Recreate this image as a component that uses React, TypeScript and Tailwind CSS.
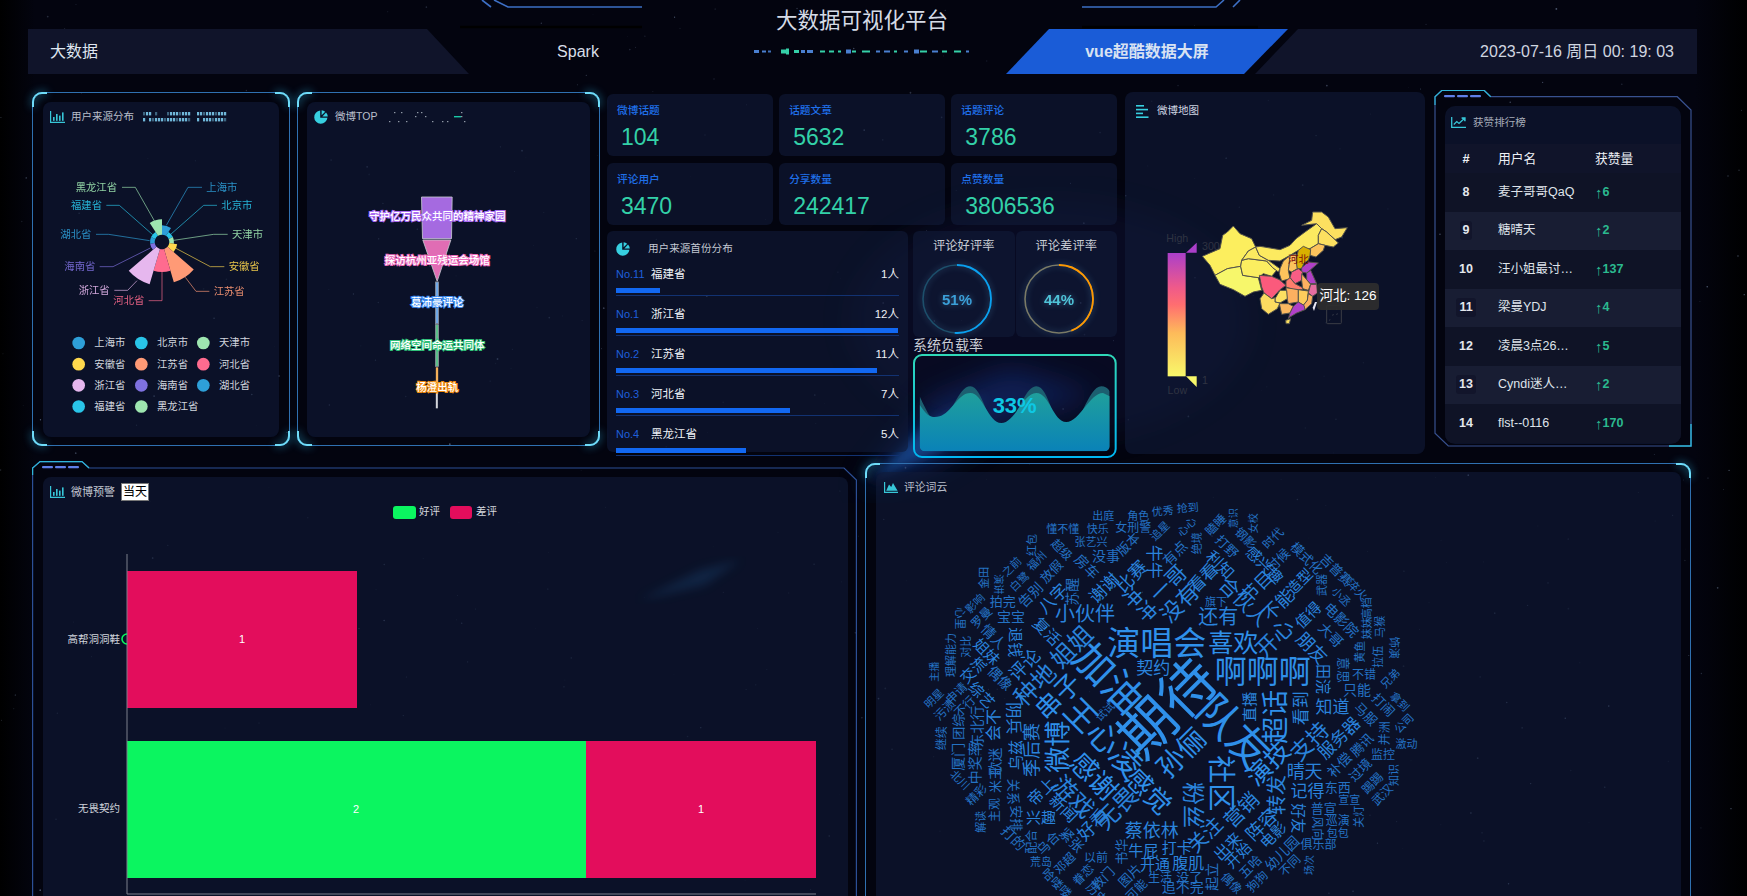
import type { ReactNode } from 'react';

type Word = [string, number, number, number, number];

// word cloud, positions read off two crops of the chart
const WORDS_L: Word[] = [
  ['出庭', 730, 182, 11, 0], ['角色', 835, 182, 11, 0], ['优秀', 908, 168, 11, -5], ['抢到', 983, 158, 11, -4],
  ['懂不懂', 608, 222, 11, 0], ['快乐', 713, 222, 11, 0], ['女刑警', 820, 218, 12, 0], ['张艺兴', 693, 260, 11, 0],
  ['没事', 738, 303, 14, 0], ['追星', 900, 228, 11, -45], ['心心', 980, 215, 11, -45], ['版本', 805, 268, 13, -45],
  ['牛牛', 880, 320, 17, 90], ['有点', 945, 295, 14, -45], ['绝境', 1010, 265, 11, -90], ['红包', 515, 270, 11, -90],
  ['超级', 605, 285, 12, 45], ['福州', 530, 318, 11, -45], ['之前', 455, 335, 11, -45], ['放假', 575, 350, 13, -45],
  ['房车', 680, 335, 14, 45], ['白鹭', 478, 380, 11, -45], ['告别', 512, 420, 14, -45], ['金田', 373, 368, 11, -90],
  ['演讲', 415, 388, 10, 90], ['拍完', 428, 440, 13, 0], ['八字', 580, 432, 17, -45], ['苏醒', 635, 410, 14, -90],
  ['谢谢', 733, 400, 17, -45], ['比赛', 815, 365, 18, -45], ['冲冲', 838, 448, 20, 45], ['一哥', 925, 385, 21, -45],
  ['影响', 345, 445, 11, -45], ['心里', 300, 490, 11, 90], ['罗曼', 365, 488, 12, -45], ['情人', 400, 545, 14, 45],
  ['宝宝', 453, 485, 14, 0], ['小伙伴', 675, 478, 20, 0], ['没有', 960, 445, 22, -45], ['看看', 1030, 370, 17, -45],
  ['利知', 1080, 330, 16, 45], ['还有', 1075, 485, 20, 0], ['旗下', 1068, 440, 11, 0], ['打野', 1100, 275, 13, 45],
  ['瞌睡', 1068, 210, 12, -45], ['喜欢', 1120, 565, 25, 0], ['演唱会', 890, 565, 33, 0], ['契约', 880, 640, 17, 0],
  ['加油', 745, 670, 40, 45], ['期待', 925, 760, 56, -45], ['队友', 1120, 830, 42, 45], ['姐姐', 635, 575, 24, -45],
  ['复活', 560, 530, 16, 45], ['退钱', 465, 562, 15, 90], ['评论', 495, 630, 18, -45], ['种地', 525, 690, 24, -45],
  ['串子', 595, 725, 26, -45], ['王心凌', 730, 850, 32, 45], ['试试', 735, 770, 11, -45], ['微博', 595, 875, 26, -90],
  ['直播', 1170, 755, 15, -90], ['社区', 1080, 985, 28, 90], ['孙俪', 965, 895, 28, -45], ['感觉', 865, 1010, 26, 45],
  ['感谢', 700, 965, 27, 45], ['游戏', 640, 1025, 24, 45], ['季后赛', 515, 885, 18, -90], ['乌兹', 465, 900, 15, -90],
  ['阴兵', 460, 790, 16, 90], ['粉丝', 1000, 1050, 23, 90], ['蔡依林', 875, 1128, 18, 0], ['牛屁', 850, 1187, 15, 0],
  ['打卡', 950, 1178, 15, 0], ['关注', 1035, 1140, 20, -45], ['营销', 1145, 1065, 20, -45], ['阵容', 1205, 1110, 18, -45],
  ['无畏', 770, 1060, 24, -45], ['好看', 700, 1110, 18, -45], ['帝上', 545, 1010, 16, -45], ['新闻', 610, 1060, 16, 45],
  ['兴趣', 543, 1087, 15, 0], ['关系', 460, 1010, 13, 90], ['安排', 468, 1090, 13, 90], ['歌迷', 405, 920, 14, -90],
  ['米王', 405, 975, 13, -90], ['中奖率', 345, 925, 14, -90], ['厦门', 295, 905, 14, -90], ['团综', 295, 815, 13, -90],
  ['东北行', 350, 815, 14, -90], ['继续', 245, 850, 12, -90], ['北川', 300, 975, 11, 45], ['精彩', 350, 1020, 12, -45],
  ['解读', 362, 1100, 11, -90], ['主观', 405, 1065, 12, -90], ['污渍', 255, 765, 12, -45], ['明星', 222, 730, 11, -45],
  ['主播', 225, 650, 10, -90], ['理解能力', 272, 600, 11, -90], ['对比', 318, 575, 11, -90], ['姐妹', 380, 590, 15, 45],
  ['交流', 340, 645, 15, -45], ['偶像', 420, 670, 14, 45], ['综艺', 365, 720, 15, 45], ['申请', 290, 715, 12, -45],
  ['不行', 315, 755, 12, -45], ['会不', 400, 810, 16, -90], ['打的', 460, 1150, 14, 45], ['配合', 515, 1160, 12, -90],
  ['乌合', 565, 1165, 13, -45], ['荒岛', 543, 1220, 11, 0], ['邓超', 615, 1225, 12, -45], ['紧张', 635, 1155, 14, 45],
  ['以前', 708, 1208, 12, 0], ['眷恋', 670, 1260, 12, -45], ['教门', 730, 1270, 13, -45], ['书华', 785, 1190, 13, -90],
  ['图片', 810, 1262, 13, -45], ['开通', 885, 1228, 15, 0], ['腹肌', 985, 1225, 16, 0], ['生活', 900, 1268, 12, 0],
  ['没了', 988, 1268, 13, 0], ['追不完', 968, 1296, 14, 0], ['哈喽喽', 590, 1285, 12, 45], ['可能', 830, 1305, 12, -45],
  ['历史', 710, 1315, 12, 45],
];

const WORDS_R: Word[] = [
  ['意识', 95, 190, 10, -90], ['女校', 152, 205, 10, -90], ['钢影', 130, 250, 12, 45], ['时代', 210, 250, 12, -45],
  ['时候', 225, 315, 13, -45], ['感兴趣', 185, 330, 15, 45], ['节目', 165, 395, 18, -45], ['合伙人', 125, 440, 20, 45],
  ['造型', 285, 380, 15, -45], ['不能', 225, 450, 18, -45], ['开心', 215, 550, 22, -45], ['模式化', 305, 310, 13, 45],
  ['吉普赛', 390, 345, 13, 45], ['淬火', 450, 405, 12, 45], ['武器', 350, 390, 11, -90], ['小丞', 405, 425, 11, 45],
  ['电影院', 405, 495, 14, 45], ['大哥', 375, 540, 14, 45], ['值得', 310, 480, 15, -45], ['朋友', 320, 580, 18, 45],
  ['高档', 480, 460, 11, -90], ['妹妹', 480, 520, 11, -90], ['马猴', 515, 515, 11, -90], ['饰演', 555, 578, 11, 90],
  ['拉伍', 510, 605, 11, -90], ['兄弟', 545, 670, 11, -45], ['黄鱼', 460, 590, 11, -90], ['意思', 410, 645, 13, 90],
  ['不错', 470, 660, 12, 0], ['田浣', 355, 672, 15, 90], ['只能', 450, 705, 14, 0], ['知道', 380, 758, 17, 0],
  ['马服', 475, 778, 13, 45], ['打闹', 525, 750, 13, 45], ['拿到', 572, 740, 11, 45], ['公司', 585, 805, 11, -45],
  ['并洲', 530, 835, 12, -90], ['激动', 592, 868, 11, 0], ['腾讯', 465, 870, 13, -45], ['服务器', 400, 850, 17, -45],
  ['支持', 315, 860, 22, -45], ['补偿', 400, 930, 14, -45], ['过境', 460, 945, 13, -45], ['监控', 525, 900, 12, 0],
  ['踢踢', 495, 985, 12, -45], ['知识', 555, 960, 11, -90], ['武汉', 523, 1020, 12, -45], ['晴天', 300, 952, 18, 0],
  ['记得', 308, 1008, 17, 0], ['东西', 395, 998, 13, 0], ['宣宣', 428, 1035, 11, 0], ['关灯', 455, 1085, 11, -90],
  ['普宣', 355, 1060, 13, 0], ['好友', 282, 1090, 15, 90], ['巡演', 395, 1098, 12, 0], ['包包', 395, 1135, 11, 0],
  ['风向', 335, 1120, 12, 90], ['俱乐部', 340, 1170, 12, 0], ['幼儿园', 235, 1195, 14, -45], ['不同', 258, 1232, 12, -45],
  ['场次', 315, 1230, 10, -90], ['狗狗', 165, 1280, 12, -45], ['五哈', 145, 1235, 13, -45], ['偶像', 90, 1285, 12, 45],
  ['开始', 110, 1200, 15, -45], ['起立', 35, 1265, 14, -90], ['出来', 80, 1175, 16, -45], ['电影', 210, 1140, 15, -45],
  ['转发', 220, 1020, 20, -90], ['演技', 195, 925, 25, -45], ['超话', 218, 785, 27, -90], ['看到', 292, 760, 17, -90],
  ['啊啊啊', 180, 650, 32, 0],
];

const ROSE = [
  { name: '上海市', color: '#2e9fd8', r: 50, line: '438,422 503,308 545,308', x: 558, y: 308, anchor: 'start' },
  { name: '北京市', color: '#29c4e8', r: 36, line: '450,450 550,362 590,362', x: 603, y: 362, anchor: 'start' },
  { name: '天津市', color: '#9ee6b0', r: 36, line: '460,467 580,449 622,449', x: 635, y: 449, anchor: 'start' },
  { name: '安徽省', color: '#ffd84d', r: 46, line: '465,490 570,546 612,546', x: 625, y: 546, anchor: 'start' },
  { name: '江苏省', color: '#ff9a76', r: 126, line: '495,578 527,620 567,620', x: 580, y: 620, anchor: 'start' },
  { name: '河北省', color: '#ff6b8f', r: 90, line: '425,562 425,648 385,648', x: 372, y: 648, anchor: 'end' },
  { name: '浙江省', color: '#e6b7ee', r: 132, line: '350,588 322,617 282,617', x: 268, y: 617, anchor: 'end' },
  { name: '海南省', color: '#7f71e0', r: 36, line: '390,490 278,546 238,546', x: 225, y: 546, anchor: 'end' },
  { name: '湖北省', color: '#2e9fd8', r: 36, line: '388,468 265,449 227,449', x: 213, y: 449, anchor: 'end' },
  { name: '福建省', color: '#29c4e8', r: 36, line: '397,450 297,362 258,362', x: 245, y: 362, anchor: 'end' },
  { name: '黑龙江省', color: '#9ee6b0', r: 68, line: '403,410 345,308 305,308', x: 290, y: 308, anchor: 'end' },
] as const;

const PROVINCES: [string, string][] = [
  ['#fcee5e', '37,198 55,190 90,175 98,135 112,125 130,107 150,130 185,145 197,170 175,182 155,210 152,228 112,235 75,255 60,225'],
  ['#f7f76b', '75,255 112,235 152,228 158,255 205,262 215,300 190,305 165,318 130,298 90,282'],
  ['#fbee60', '152,228 155,210 175,205 230,212 248,232 260,240 245,258 220,250 205,262 158,255'],
  ['#fcea60', '175,182 197,170 208,195 235,210 270,235 265,245 248,232 230,212 175,205 155,210'],
  ['#fcea60', '197,170 210,168 270,178 300,165 318,145 345,125 380,100 395,115 385,135 385,160 360,175 325,180 300,195 270,212 235,210 208,195'],
  ['#fce060', '335,105 365,90 368,65 395,65 415,80 435,115 472,112 455,140 435,148 410,125 395,115 380,100'],
  ['#fce060', '385,135 395,115 410,125 435,148 445,158 430,170 405,165 385,160'],
  ['#fcc35c', '360,175 385,160 405,165 400,180 378,200 360,195'],
  ['#fcc35c', '300,195 318,190 322,235 305,245 295,240'],
  ['#fcc35c', '270,235 280,212 300,195 295,240 300,265 275,272 268,250'],
  ['#d9b000', '325,180 340,168 362,178 360,195 355,210 342,218 335,235 322,235 318,208'],
  ['#b040c8', '335,232 355,215 385,218 362,238 350,248 335,245'],
  ['#f95d85', '305,245 325,235 338,245 335,270 315,280 300,262'],
  ['#b040c8', '350,248 362,240 380,280 362,280 350,268'],
  ['#fcb060', '335,250 350,268 362,282 355,300 338,295 335,270'],
  ['#ff7e6c', '288,272 300,262 315,280 338,292 338,298 310,298 288,290'],
  ['#e66da0', '362,282 380,282 382,308 368,318 355,308'],
  ['#fb5a7c', '208,255 245,258 268,268 288,285 270,298 245,325 222,308 215,290'],
  ['#fcb060', '288,292 325,298 325,335 295,340 290,320'],
  ['#fdcc5c', '325,298 355,302 352,330 340,345 325,335'],
  ['#fcb060', '355,310 368,318 365,340 345,358 340,345 352,330'],
  ['#fce062', '255,325 270,300 290,300 292,325 270,338 255,335'],
  ['#fcdb60', '210,325 222,308 245,325 255,322 255,335 270,338 262,355 235,372 215,355'],
  ['#fcb860', '268,340 295,340 310,348 300,368 275,372'],
  ['#b040c8', '300,368 310,348 325,335 342,345 345,358 320,368 300,380 295,385'],
  ['#fce060', '287,390 302,385 298,400 288,400'],
];

const FUNNEL = [
  { label: '守护亿万民众共同的精神家园', y: 395, glow: '#a96bf0' },
  { label: '探访杭州亚残运会场馆', y: 525, glow: '#ea6cbd' },
  { label: '葛沛豪评论', y: 652, glow: '#3f8cf0' },
  { label: '网络空间命运共同体', y: 782, glow: '#2fbf78' },
  { label: '杨澄出轨', y: 908, glow: '#f08c10' },
];

const STATS = [
  ['微博话题', '104'], ['话题文章', '5632'], ['话题评论', '3786'],
  ['评论用户', '3470'], ['分享数量', '242417'], ['点赞数量', '3806536'],
];

const PROVINCE_ROWS = [
  ['No.11', '福建省', '1人', 44], ['No.1', '浙江省', '12人', 282], ['No.2', '江苏省', '11人', 261],
  ['No.3', '河北省', '7人', 174], ['No.4', '黑龙江省', '5人', 130],
] as const;

const RANKS = [
  ['8', '麦子哥哥QaQ', '6'], ['9', '糖晴天', '2'], ['10', '汪小姐最讨…', '137'], ['11', '梁曼YDJ', '4'],
  ['12', '凌晨3点26…', '5'], ['13', 'Cyndi迷人…', '2'], ['14', 'flst--0116', '170'],
];

const STARS = (() => {
  const out: { x: number; y: number; r: number; o: number }[] = [];
  let s = 42;
  const rnd = () => (s = (s * 16807) % 2147483647) / 2147483647;
  for (let i = 0; i < 420; i++) {
    out.push({ x: rnd() * 1747, y: rnd() * 896, r: 0.3 + rnd() * 0.6, o: 0.12 + rnd() * 0.4 });
  }
  return out;
})();

function slice(r: number, i: number) {
  const step = (Math.PI * 2) / 11;
  const a = i * step - Math.PI / 2;
  const b = a + step;
  const p = (rad: number, ang: number) => `${425 + rad * Math.cos(ang)} ${472 + rad * Math.sin(ang)}`;
  return `M${p(22, a)} L${p(r, a)} A${r} ${r} 0 0 1 ${p(r, b)} L${p(22, b)} A22 22 0 0 0 ${p(22, a)} Z`;
}

function BarIcon() {
  return (
    <svg width="15" height="12" viewBox="0 0 15 12" className="shrink-0" fill="#37c6d8">
      <path d="M0 0h1.2v10.8H15V12H0z" />
      <rect x="3" y="6" width="1.6" height="3.8" />
      <rect x="6" y="3" width="1.6" height="6.8" />
      <rect x="9" y="4.6" width="1.6" height="5.2" />
      <rect x="12" y="1.4" width="1.6" height="8.4" />
    </svg>
  );
}

function PieIcon() {
  return (
    <svg width="14" height="14" viewBox="0 0 14 14" className="shrink-0" fill="#37cfe0">
      <path d="M6.2 0.6v7.2h7.2A6.6 6.6 0 1 1 6.2 0.6z" />
      <path d="M7.6 0.2A6.4 6.4 0 0 1 11.2 1.8L7.6 5.2z" />
      <path d="M12 2.6A6.4 6.4 0 0 1 13.8 6.4H8.4z" />
    </svg>
  );
}

function LinesIcon() {
  return (
    <svg width="13" height="13" viewBox="0 0 13 13" className="shrink-0" fill="#37cfe0">
      <rect y="0" width="8" height="1.6" />
      <rect y="3.8" width="12" height="1.6" />
      <rect y="7.6" width="7" height="1.6" />
      <rect y="11.4" width="12.5" height="1.6" />
    </svg>
  );
}

function TrendIcon() {
  return (
    <svg width="15" height="11" viewBox="0 0 15 11" className="shrink-0" fill="none" stroke="#37c6d8" strokeWidth="1.3">
      <path d="M0.7 0v10.3H15" />
      <path d="M2.8 7.4 5.8 4.6 8 6.4 13.6 1.2" />
      <path d="M10.6 1h3.4v3.2" fill="#37c6d8" />
    </svg>
  );
}

function AreaIcon() {
  return (
    <svg width="14" height="11" viewBox="0 0 14 11" className="shrink-0" fill="#37c6d8">
      <path d="M0 0h1.2v9.8H14V11H0z" />
      <path d="M2.2 8.8 5 2.4 7.2 5 9 1 13.6 8.8z" />
    </svg>
  );
}

function PanelTitle({ icon, text, gap, children }: { icon: ReactNode; text: string; gap: string; children?: ReactNode }) {
  return (
    <div className={`flex h-[30px] items-center pl-[7px] ${gap}`}>
      {icon}
      <span className="text-[10.5px] text-[#b9bfcb]">{text}</span>
      {children}
    </div>
  );
}

function DotStrip() {
  const rows = ['1110100011111111001111111111', '1011111111111111001011111111'];
  return (
    <svg width="84" height="10" viewBox="0 0 84 10" className="ml-[3px]">
      {rows.map((row, y) =>
        row.split('').map((c, x) =>
          c === '1' ? (
            <rect key={`${x}-${y}`} x={x * 3} y={y * 6} width="2.2" height="3.4" fill="#7acaec" opacity={(x * 7 + y * 3) % 4 === 0 ? 0.45 : 0.9} />
          ) : null,
        ),
      )}
    </svg>
  );
}

function SparseStrip() {
  const pts = [[5, 0], [12, 0], [28, 0], [32, 0], [72, 0], [26, 4], [36, 4], [72, 4], [0, 9], [9, 9], [17, 9], [43, 9], [53, 9], [58, 9], [75, 9]];
  return (
    <svg width="84" height="11" viewBox="0 0 84 11" className="ml-[5px]">
      {pts.map(([x, y], i) => (
        <rect key={i} x={x} y={y} width="1.4" height="1.2" fill="#c9d2dc" opacity="0.7" />
      ))}
      <rect x="65" y="4" width="7" height="1.4" fill="#19c9a6" />
    </svg>
  );
}

function Frame({ className, children, bottom = true }: { className: string; children: ReactNode; bottom?: boolean }) {
  const corner = 'absolute h-[15px] w-[15px] border-[#6fdcf8] drop-shadow-[0_0_4px_#2fbdf0]';
  return (
    <div className={`relative shrink-0 rounded-[10px] border border-[#2f70b0] ${className}`}>
      <div className={`${corner} -left-px -top-px rounded-tl-[10px] border-l-2 border-t-2`} />
      <div className={`${corner} -right-px -top-px rounded-tr-[10px] border-r-2 border-t-2`} />
      {bottom && <div className={`${corner} -bottom-px -left-px rounded-bl-[10px] border-b-2 border-l-2`} />}
      {bottom && <div className={`${corner} -bottom-px -right-px rounded-br-[10px] border-b-2 border-r-2`} />}
      {children}
    </div>
  );
}

function Pills({ y }: { y: number }) {
  return (
    <>
      <rect x="10" y={y} width="11" height="2.2" rx="1" fill="#5f7fe8" />
      <rect x="23" y={y} width="11" height="2.2" rx="1" fill="#5f7fe8" />
      <rect x="36" y={y} width="11" height="2.2" rx="1" fill="#5f7fe8" />
    </>
  );
}

function RoseChart() {
  return (
    <svg width="236" height="305" viewBox="68 142 708 915" className="block">
      {ROSE.map((d, i) => (
        <g key={d.name}>
          <path d={slice(d.r, i)} fill={d.color} />
          <polyline points={d.line} fill="none" stroke={d.color} strokeWidth="3" opacity="0.65" />
          <text x={d.x} y={d.y} fontSize="31" fill={d.color} opacity="0.9" textAnchor={d.anchor} dominantBaseline="central">
            {d.name}
          </text>
        </g>
      ))}
      {ROSE.map((d, i) => {
        const col = i % 3;
        const row = Math.floor(i / 3);
        const dx = [175, 363, 549][col];
        const y = 775 + row * 63.5;
        return (
          <g key={d.name}>
            <circle cx={dx} cy={y} r="19" fill={d.color} />
            <text x={dx + 47} y={y} fontSize="31" fill="#d2d6de" dominantBaseline="central">
              {d.name}
            </text>
          </g>
        );
      })}
    </svg>
  );
}

function FunnelChart() {
  return (
    <svg width="283" height="305" viewBox="37 142 848 915" className="block">
      <g stroke="#c5c8d0" strokeWidth="2.5">
        <polygon points="380,337 472,337 470,462 383,462" fill="#a56ae0" />
        <polygon points="384,466 468,466 427,590" fill="#e06db4" />
        <rect x="422" y="592" width="9" height="125" fill="#6fa8e8" stroke="#8a8f9a" />
        <rect x="422" y="720" width="9" height="125" fill="#5cc08a" stroke="#8a8f9a" />
        <rect x="423" y="848" width="7" height="80" fill="#f4b05a" stroke="none" />
        <rect x="423" y="928" width="6" height="43" fill="#d4d6dc" stroke="none" />
      </g>
      {FUNNEL.map((f) => (
        <text
          key={f.label}
          x="427"
          y={f.y}
          fontSize="31.5"
          fontWeight="500"
          textAnchor="middle"
          dominantBaseline="central"
          fill="#fff"
          stroke={f.glow}
          strokeWidth="6"
          paintOrder="stroke"
        >
          {f.label}
        </text>
      ))}
    </svg>
  );
}

function Ring({ pct, color, rest, text, textColor }: { pct: number; color: string; rest: string; text: string; textColor: string }) {
  const c = 2 * Math.PI * 34;
  return (
    <svg width="80" height="76" viewBox="0 0 80 76" className="block -translate-x-[7px] drop-shadow-[0_0_3px_rgba(90,170,220,0.45)]">
      <circle cx="40" cy="38" r="34" fill="none" stroke={rest} strokeWidth="1.6" />
      <circle
        cx="40"
        cy="38"
        r="34"
        fill="none"
        stroke={color}
        strokeWidth="1.8"
        strokeDasharray={`${(c * pct) / 100} ${c}`}
        transform="rotate(-90 40 38)"
      />
      <text x="40" y="38" fontSize="15" fontWeight="700" fill={textColor} textAnchor="middle" dominantBaseline="central">
        {text}
      </text>
    </svg>
  );
}

function WaveGauge() {
  return (
    <svg width="204" height="104" viewBox="940 808 612 312" className="block">
      <defs>
        <linearGradient id="waveBorder" x1="0" y1="0" x2="0" y2="1">
          <stop offset="0" stopColor="#2fd8b8" />
          <stop offset="1" stopColor="#00b6f2" />
        </linearGradient>
        <linearGradient id="waveFill" x1="0" y1="0" x2="0" y2="1">
          <stop offset="0" stopColor="#1f9f9c" />
          <stop offset="1" stopColor="#0a82b8" />
        </linearGradient>
        <clipPath id="waveClip">
          <rect x="960" y="850" width="570" height="250" rx="16" />
        </clipPath>
      </defs>
      <rect x="943" y="811" width="605" height="306" rx="24" fill="none" stroke="url(#waveBorder)" strokeWidth="6" />
      <g clipPath="url(#waveClip)">
        <path
          d="M960 935 C985 990 1000 1018 1020 1012 C1055 1000 1075 905 1112 905 C1150 905 1165 1035 1205 1035 C1245 1035 1270 905 1310 905 C1350 905 1360 1035 1400 1035 C1440 1035 1465 905 1505 905 C1515 905 1525 910 1530 920 L1530 1100 L960 1100 Z"
          fill="#1c5f70"
        />
        <path
          d="M960 960 C985 1000 1000 1000 1020 995 C1055 985 1075 925 1112 925 C1150 925 1165 1015 1205 1015 C1245 1015 1270 925 1310 925 C1350 925 1360 1012 1400 1012 C1440 1012 1470 925 1510 925 L1530 935 L1530 1100 L960 1100 Z"
          fill="url(#waveFill)"
        />
      </g>
      <text x="1245" y="962" fontSize="66" fontWeight="700" fill="#0ec8e4" textAnchor="middle" dominantBaseline="central">
        33%
      </text>
    </svg>
  );
}

function ChinaMap() {
  return (
    <svg width="300" height="332" viewBox="15 110 900 996" className="block">
      <defs>
        <linearGradient id="legendGrad" x1="0" y1="0" x2="0" y2="1">
          <stop offset="0" stopColor="#ab3fca" />
          <stop offset="0.28" stopColor="#ef5a8a" />
          <stop offset="0.42" stopColor="#ff6e70" />
          <stop offset="0.65" stopColor="#fdbb5a" />
          <stop offset="1" stopColor="#f8f86a" />
        </linearGradient>
      </defs>
      <rect x="143" y="503" width="54" height="370" fill="url(#legendGrad)" />
      <polygon points="230,472 230,502 198,502" fill="#ab3fca" />
      <polygon points="198,873 230,873 230,905" fill="#f8f86a" />
      <g fill="#2f3342" fontSize="32">
        <text x="172" y="458" textAnchor="middle" dominantBaseline="central">High</text>
        <text x="246" y="483" dominantBaseline="central">300</text>
        <text x="172" y="913" textAnchor="middle" dominantBaseline="central">Low</text>
        <text x="246" y="885" dominantBaseline="central">1</text>
      </g>
      <g transform="translate(210 315)">
        {PROVINCES.map(([fill, points], i) => (
          <polygon key={i} points={points} fill={fill} stroke="#55534a" strokeWidth="3" strokeLinejoin="round" />
        ))}
        <text x="325" y="207" fontSize="32" fill="#7d0a0a" textAnchor="middle" dominantBaseline="central">河北</text>
        <polygon points="375,335 381,335 372,362 368,352" fill="#e6e6f0" />
        <rect x="410" y="345" width="44" height="55" rx="3" fill="none" stroke="#3b3d45" strokeWidth="3" />
        <path d="M420 355v4M440 355v4M430 371l-2 5M442 369l-2 5M420 387l-2 4" stroke="#4a4d57" strokeWidth="2" />
      </g>
    </svg>
  );
}

function WordCloud() {
  const words: Word[] = [
    ...WORDS_L.map(([t, x, y, s, r]): Word => [t, 860 + x / 3, 455 + y / 3, s, r]),
    ...WORDS_R.map(([t, x, y, s, r]): Word => [t, 1200 + x / 2.867, 455 + y / 3, s, r]),
  ];
  return (
    <svg width="805" height="396" viewBox="876 500 805 396" className="block">
      {words.map(([t, x, y, s, r], i) => (
        <text
          key={i}
          x={x}
          y={y}
          fontSize={s}
          fill={s > 24 ? '#2f90ea' : s > 14 ? '#2a83dc' : '#2472c4'}
          textAnchor="middle"
          dominantBaseline="central"
          transform={r ? `rotate(${r} ${x} ${y})` : undefined}
        >
          {t}
        </text>
      ))}
    </svg>
  );
}

function ReviewBars() {
  return (
    <svg width="805" height="392" viewBox="43 504 805 392" className="block">
      <rect x="393" y="506" width="23" height="13" rx="3" fill="#0bf560" />
      <text x="419" y="511" fontSize="10.5" fill="#d5d8df" dominantBaseline="central">好评</text>
      <rect x="450" y="506" width="22" height="13" rx="3" fill="#e30d5c" />
      <text x="476" y="511" fontSize="10.5" fill="#d5d8df" dominantBaseline="central">差评</text>
      <rect x="127" y="571" width="230" height="137" fill="#e30d5c" />
      <rect x="127" y="741" width="459" height="137" fill="#0bf560" />
      <rect x="586" y="741" width="230" height="137" fill="#e30d5c" />
      <path d="M127 554V894H816" fill="none" stroke="#7c808c" />
      <path d="M127 634a5 5 0 0 0 0 10" fill="none" stroke="#0bf560" strokeWidth="1.6" />
      <g fontSize="11" fill="#fff" textAnchor="middle" dominantBaseline="central">
        <text x="242" y="639">1</text>
        <text x="356" y="809">2</text>
        <text x="701" y="809">1</text>
      </g>
      <g fontSize="10.5" fill="#d0d4dc" textAnchor="end" dominantBaseline="central">
        <text x="120" y="639">高帮洞洞鞋</text>
        <text x="120" y="808">无畏契约</text>
      </g>
    </svg>
  );
}

function TitleDeco() {
  const cells = [
    [0, 5, 3, '#4a7fd0'], [8, 4, 2, '#4a7fd0'], [14, 3, 2, '#3f6fb8'], [27, 5, 4, '#35d0a8'], [32, 3, 6, '#35d0a8'],
    [40, 5, 3, '#35d0a8'], [47, 4, 3, '#4a7fd0'], [53, 6, 3, '#4a7fd0'], [66, 5, 2, '#35d0a8'], [75, 5, 2, '#35d0a8'],
    [84, 3, 2, '#35d0a8'], [92, 5, 4, '#4a7fd0'], [98, 4, 2, '#35d0a8'], [108, 8, 2, '#35d0a8'], [122, 4, 2, '#4a7fd0'],
    [130, 6, 2, '#4a7fd0'], [140, 3, 2, '#35d0a8'], [150, 4, 2, '#4a7fd0'], [160, 5, 4, '#4a7fd0'], [166, 7, 2, '#35d0a8'],
    [178, 6, 2, '#4a7fd0'], [188, 5, 2, '#35d0a8'], [200, 7, 2, '#35d0a8'], [212, 3, 2, '#4a7fd0'],
  ] as const;
  return (
    <svg width="216" height="9" viewBox="0 0 216 9" className="mt-[10px] block">
      {cells.map(([x, w, h, fill], i) => (
        <rect key={i} x={x} y={4.5 - h / 2} width={w} height={h} fill={fill} />
      ))}
    </svg>
  );
}

function Backdrop() {
  return (
    <svg width="1747" height="896" viewBox="0 0 1747 896" className="absolute left-0 top-0">
      <defs>
        <filter id="blur14"><feGaussianBlur stdDeviation="14" /></filter>
        <filter id="blur5"><feGaussianBlur stdDeviation="5" /></filter>
      </defs>
      <polygon points="860,490 930,400 1010,368 1100,395 1010,420 930,470" fill="#14388c" opacity="0.55" filter="url(#blur14)" />
      <polygon points="872,480 925,425 985,395 940,450" fill="#1c62b8" opacity="0.5" filter="url(#blur5)" />
      <polygon points="640,600 700,570 740,560 705,585" fill="#1a5a8c" opacity="0.55" filter="url(#blur5)" />
      <ellipse cx="1050" cy="320" rx="200" ry="120" fill="#171a52" opacity="0.28" filter="url(#blur14)" />
      {STARS.map((s, i) => (
        <circle key={i} cx={s.x} cy={s.y} r={s.r} fill="#9fb4d8" opacity={s.o} />
      ))}
    </svg>
  );
}

export default function App() {
  const card = 'bg-[#101a3899]';
  return (
    <div className="relative h-[896px] w-[1747px] overflow-hidden bg-[linear-gradient(90deg,#000_0,#03040f_2%,#03040f_97%,#000_100%)] font-['Liberation_Sans','Noto_Sans_CJK_SC',sans-serif] text-white">
      <Backdrop />
      <svg width="1747" height="30" viewBox="0 0 1747 30" className="absolute left-0 top-0">
        <path d="M482 0 491 7M494 0 508 7H642M1082 7H1216L1224 0M1233 7 1240 0" fill="none" stroke="#3d6fc4" strokeWidth="1.6" />
        <path d="M460 27H642M1082 27H1258" fill="none" stroke="#000" strokeWidth="2.5" />
      </svg>

      <div className="relative">
        {/* top bar */}
        <div className="flex h-[74px] items-end pl-[28px]">
          <div className="flex h-[45px] w-[441px] items-center bg-[#10142a] pl-[22px] text-[16px] text-[#dfe6f0] [clip-path:polygon(0_0,399px_0,100%_100%,0_100%)]">
            大数据
          </div>
          <div className="flex h-[45px] w-[218px] items-center justify-center text-[16px] text-[#d8dee8]">Spark</div>
          <div className="mb-[18px] flex w-[319px] flex-col items-center self-end pl-[31px]">
            <div className="text-[21.5px] leading-[32px] text-[#d5dbe6]">大数据可视化平台</div>
            <TitleDeco />
          </div>
          <div className="flex h-[45px] w-[282px] items-center justify-center bg-[#1a5cd7] text-[16px] font-bold text-[#d8e2f2] [clip-path:polygon(43px_0,100%_0,238px_100%,0_100%)]">
            vue超酷数据大屏
          </div>
          <div className="-ml-[33px] flex h-[45px] w-[442px] items-center justify-end bg-[#10142a] pr-[23px] text-[16px] text-[#d0d6e0] [clip-path:polygon(43px_0,100%_0,100%_100%,0_100%)]">
            2023-07-16 周日 00: 19: 03
          </div>
        </div>

        {/* first row */}
        <div className="mt-[16px] flex h-[371px] items-start pl-[32px]">
          <Frame className="mt-[2px] h-[354px] w-[258px] pl-[10px] pt-[9px]">
            <div className={`h-[335px] w-[236px] rounded-[8px] ${card}`}>
              <PanelTitle icon={<BarIcon />} text="用户来源分布" gap="gap-[6px]">
                <DotStrip />
              </PanelTitle>
              <RoseChart />
            </div>
          </Frame>

          <Frame className="ml-[7px] mt-[2px] h-[354px] w-[303px] pl-[9px] pt-[9px]">
            <div className={`h-[335px] w-[283px] rounded-[8px] ${card}`}>
              <PanelTitle icon={<PieIcon />} text="微博TOP" gap="gap-[7px]">
                <SparseStrip />
              </PanelTitle>
              <FunnelChart />
            </div>
          </Frame>

          <div className="ml-[7px] mt-[4px] w-[510px] shrink-0">
            <div className="grid grid-cols-3 gap-x-[6.5px] gap-y-[7px]">
              {STATS.map(([label, value]) => (
                <div key={label} className={`h-[62px] rounded-[6px] pl-[10px] pt-[8px] ${card}`}>
                  <div className="text-[10.7px] font-medium leading-[16px] text-[#1f6fe8]">{label}</div>
                  <div className="mt-[4px] pl-[4px] text-[23px] leading-[30px] text-[#33d1a8]">{value}</div>
                </div>
              ))}
            </div>

            <div className="mt-[6px] flex gap-[5px]">
              <div className={`h-[221px] w-[301px] rounded-[6px] px-[9px] ${card}`}>
                <div className="flex h-[35px] items-center gap-[18px]">
                  <PieIcon />
                  <span className="text-[10.6px] text-[#c3c8d2]">用户来源首份分布</span>
                </div>
                {PROVINCE_ROWS.map(([no, name, count, width]) => (
                  <div key={no} className="h-[40px]">
                    <div className="flex h-[16px] items-center text-[11.5px] leading-[16px]">
                      <span className="w-[35px] text-[11px] text-[#1f5fdc]">{no}</span>
                      <span className="text-[#eef1f6]">{name}</span>
                      <span className="ml-auto text-[#eef1f6]">{count}</span>
                    </div>
                    <div className="mt-[6px] h-[5px] bg-[#1268f2]" style={{ width }} />
                    <div className="mt-[2px] h-px bg-[#123272]" />
                  </div>
                ))}
              </div>

              <div className="w-[204px]">
                <div className="grid h-[106px] grid-cols-2 gap-px">
                  <div className={`flex flex-col items-center rounded-[6px] ${card}`}>
                    <div className="text-[12.3px] leading-[30px] text-[#c8ccd4]">评论好评率</div>
                    <Ring pct={51} color="#0aa0f0" rest="#1d4f6b" text="51%" textColor="#3b9fd8" />
                  </div>
                  <div className={`flex flex-col items-center rounded-[6px] ${card}`}>
                    <div className="text-[12.3px] leading-[30px] text-[#c8ccd4]">评论差评率</div>
                    <Ring pct={44} color="#ff9800" rest="#7a7a66" text="44%" textColor="#4fc3d8" />
                  </div>
                </div>
                <div className="h-[17px] text-[14px] leading-[17px] text-[#c8ccd4]">系统负载率</div>
                <WaveGauge />
              </div>
            </div>
          </div>

          <div className={`relative ml-[8px] mt-[2px] h-[362px] w-[300px] shrink-0 rounded-[8px] ${card}`}>
            <div className="flex h-[30px] items-center gap-[8px] pl-[11px] pt-[8px]">
              <LinesIcon />
              <span className="text-[10.5px] text-[#cdd3e0]">微博地图</span>
            </div>
            <ChinaMap />
            <div className="absolute left-[192px] top-[191px] flex h-[27px] w-[62px] items-center justify-center rounded-[4px] bg-[#2e2e2ee8] text-[13.5px] text-white">
              河北: 126
            </div>
          </div>

          <div className="relative ml-[9px] h-[357px] w-[258px] shrink-0 pl-[11px] pt-[16px]">
            <svg width="258" height="357" viewBox="0 0 258 357" className="absolute left-0 top-0" fill="none">
              <path d="M1 15V6.7L7.7.5H50.3L56.7 6.7H243.3L257 20V356H14.3L1 343.3Z" stroke="#38518f" strokeWidth="1.2" />
              <path d="M1 15V6.7L7.7.5H50.3L56.7 6.7" stroke="#2fb6d8" strokeWidth="1.2" />
              <path d="M257 334V356H235" stroke="#2fb6d8" strokeWidth="1.4" />
              <Pills y={5} />
            </svg>
            <div className={`relative h-[338px] w-[236px] overflow-hidden rounded-[10px] ${card}`}>
              <div className="flex h-[38px] items-center gap-[7px] pb-[7px] pl-[6px] pt-[2px]">
                <TrendIcon />
                <span className="text-[10.6px] text-[#a6acb8]">获赞排行榜</span>
              </div>
              <div className="flex h-[29px] items-center bg-[#10142a] text-[12.8px] text-[#eef1f6]">
                <span className="w-[42px] text-center font-bold">#</span>
                <span className="ml-[11px] w-[97px]">用户名</span>
                <span>获赞量</span>
              </div>
              {RANKS.map(([rank, name, up], i) => (
                <div key={rank} className={`flex h-[38.5px] items-center text-[12.5px] ${i % 2 ? 'bg-[#181d33]' : 'bg-[#0f1326]'}`}>
                  <span className="flex w-[42px] justify-center font-bold text-[#e4e7ed]">
                    <span className={`rounded-[3px] px-[3px] ${i % 2 ? 'bg-[#12152b]' : ''}`}>{rank}</span>
                  </span>
                  <span className="ml-[11px] w-[97px] whitespace-nowrap text-[#dfe3ea]">{name}</span>
                  <span className="flex items-center font-bold text-[#2bb98f]">
                    <span className="text-[15px] font-normal leading-none">↑</span>
                    {up}
                  </span>
                </div>
              ))}
            </div>
          </div>
        </div>

        {/* second row */}
        <div className="flex items-start pl-[32px]">
          <div className="relative h-[500px] w-[825px] shrink-0 pl-[11px] pt-[16px]">
            <svg width="825" height="500" viewBox="0 0 825 500" className="absolute left-0 top-0" fill="none">
              <path d="M.6 500V7L8 .6H50L57 7H812L824.4 19V500" stroke="#2c4f96" strokeWidth="1.2" />
              <path d="M.6 14V7L8 .6H50L57 7" stroke="#2fb6d8" strokeWidth="1.2" />
              <Pills y={5} />
            </svg>
            <div className={`relative h-[484px] w-[805px] rounded-[8px] ${card}`}>
              <div className="flex h-[27px] items-center gap-[6px] pl-[7px] pt-[3px]">
                <BarIcon />
                <span className="text-[11px] text-[#c3c8d2]">微博预警</span>
                <span className="border border-[#777] bg-white px-px text-[12px] leading-[16px] text-black">当天</span>
              </div>
              <ReviewBars />
            </div>
          </div>

          <Frame className="ml-[8px] mt-[2px] h-[500px] w-[826px] pl-[10px] pt-[8px]" bottom={false}>
            <div className={`h-[480px] w-[805px] rounded-[8px] ${card}`}>
              <div className="flex h-[28px] items-center gap-[6px] pl-[8px] pt-[2px]">
                <AreaIcon />
                <span className="text-[10.8px] text-[#b9bfcb]">评论词云</span>
              </div>
              <WordCloud />
            </div>
          </Frame>
        </div>
      </div>
    </div>
  );
}
